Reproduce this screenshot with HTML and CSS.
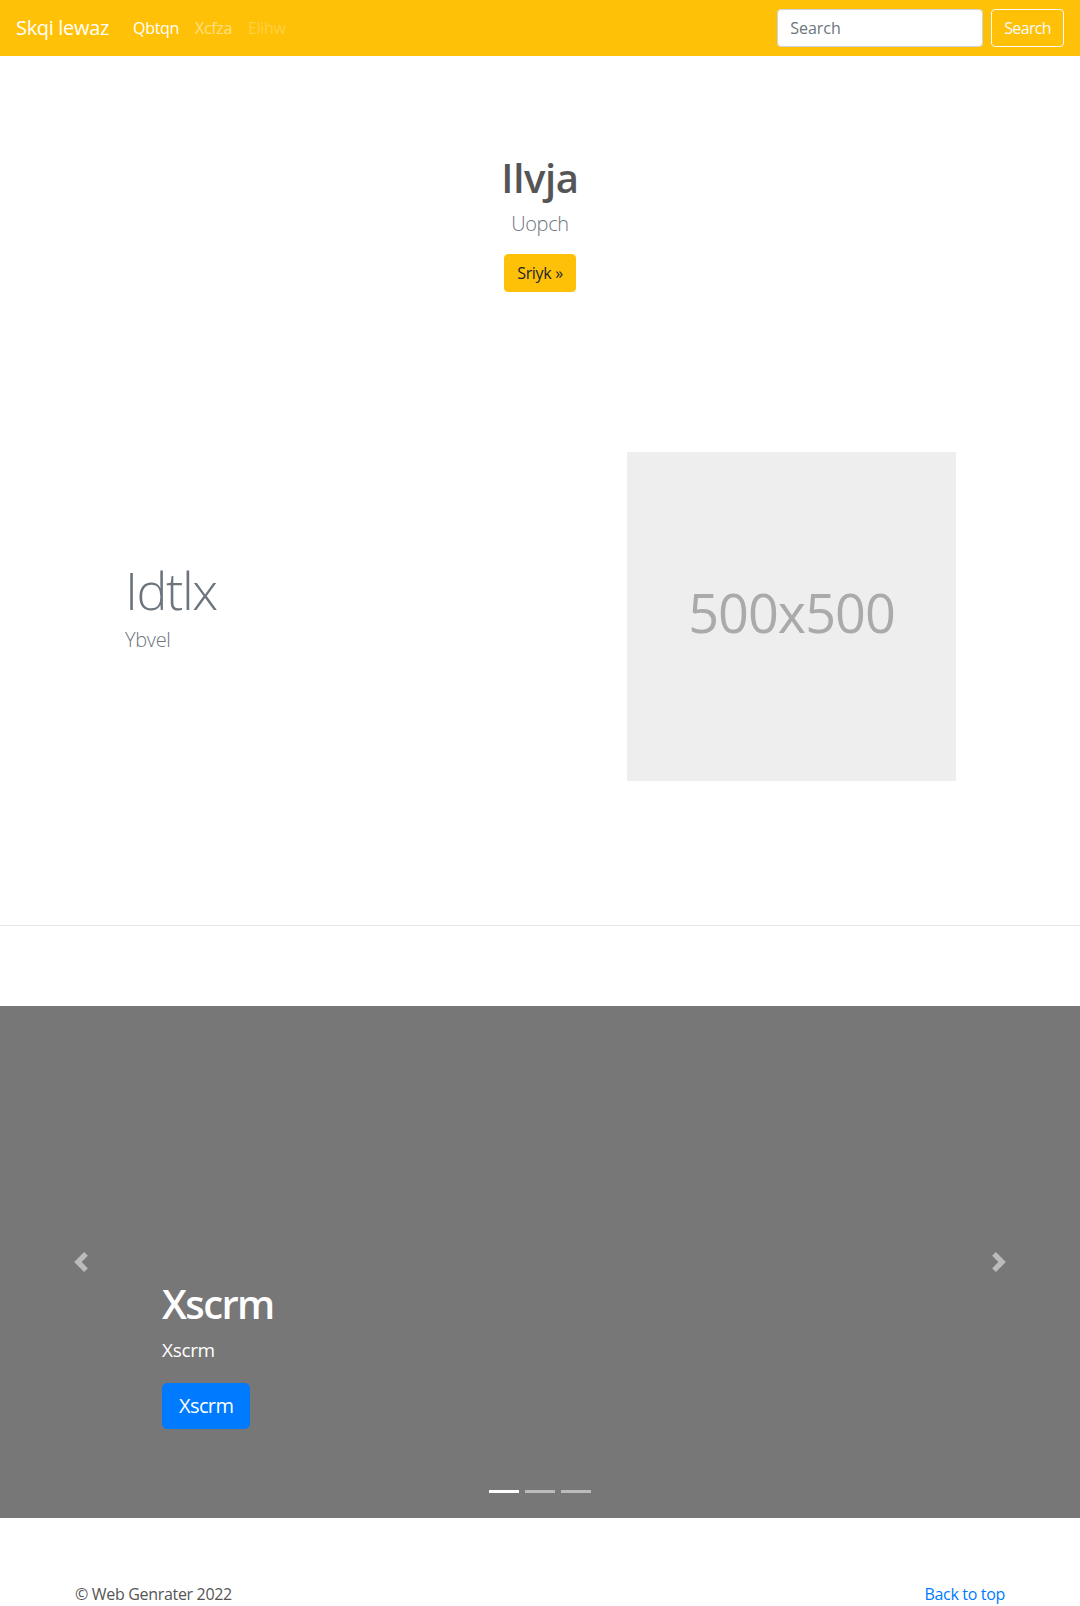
FILE: index.html
```html
<!DOCTYPE html>
<html lang="en">
<head>
<meta charset="utf-8">
<title>Skqi lewaz</title>
<link rel="stylesheet" href="styles.css">
</head>
<body>
<nav class="navbar">
  <a class="brand" href="#">Skqi lewaz</a>
  <ul class="nav">
    <li><a class="nav-link active" href="#">Qbtqn</a></li>
    <li><a class="nav-link" href="#">Xcfza</a></li>
    <li><a class="nav-link disabled" href="#">Elihw</a></li>
  </ul>
  <form class="search">
    <input class="search-input" type="text" placeholder="Search">
    <button class="search-btn" type="button">Search</button>
  </form>
</nav>

<section class="hero">
  <h1 class="hero-title">Ilvja</h1>
  <p class="hero-lead">Uopch</p>
  <a class="btn-warning" href="#">Sriyk &raquo;</a>
</section>

<section class="feature">
  <div class="feature-text">
    <h2 class="display">Idtlx</h2>
    <p class="feature-lead">Ybvel</p>
  </div>
  <div class="feature-media">
    <svg class="placeholder" width="329" height="329" viewBox="0 0 329 329">
      <rect width="329" height="329" fill="#eeeeee"/>
      <text x="164.5" y="181" text-anchor="middle" class="ph-text">500x500</text>
    </svg>
  </div>
</section>

<hr class="divider">

<div class="carousel">
  <ol class="indicators">
    <li class="active"></li>
    <li></li>
    <li></li>
  </ol>
  <div class="caption">
    <h1 class="caption-title">Xscrm</h1>
    <p class="caption-text">Xscrm</p>
    <p class="caption-action"><a class="btn-primary" href="#">Xscrm</a></p>
  </div>
  <a class="control control-prev" href="#">
    <svg width="20" height="20" viewBox="0 0 8 8"><path fill="#fff" d="M5.25 0l-4 4 4 4 1.5-1.5L4.25 4l2.5-2.5L5.25 0z"/></svg>
  </a>
  <a class="control control-next" href="#">
    <svg width="20" height="20" viewBox="0 0 8 8"><path fill="#fff" d="M2.75 0l-1.5 1.5L3.75 4l-2.5 2.5L2.75 8l4-4-4-4z"/></svg>
  </a>
</div>

<footer class="footer">
  <p class="copy">&copy; Web Genrater 2022</p>
  <p class="totop"><a href="#">Back to top</a></p>
</footer>
</body>
</html>
```

FILE: styles.css
```css
* { box-sizing: border-box; }

html, body {
  margin: 0;
  padding: 0;
}

body {
  font-family: "Open Sans", "Noto Sans", "Liberation Sans", sans-serif;
  font-size: 16px;
  line-height: 1.5;
  color: #555;
  background: #fff;
  letter-spacing: -0.02em;
}

a { text-decoration: none; }

/* Navbar */
.navbar {
  display: flex;
  align-items: center;
  height: 56px;
  padding: 0 16px;
  background: #ffc107;
}

.brand {
  font-size: 20px;
  line-height: 30px;
  color: #fff;
  margin-right: 16px;
}

.nav {
  display: flex;
  list-style: none;
  margin: 0;
  padding: 0;
}

.nav-link {
  display: block;
  padding: 8px;
  color: rgba(255, 255, 255, 0.5);
}

.nav-link.active { color: #fff; }
.nav-link.disabled { color: rgba(255, 255, 255, 0.25); }

.search {
  display: flex;
  align-items: center;
  margin-left: auto;
}

.search-input {
  width: 206px;
  height: 38px;
  padding: 6px 12px;
  font: inherit;
  font-size: 16px;
  color: #495057;
  background: #fff;
  border: 1px solid #ced4da;
  border-radius: 4px;
  margin-right: 8px;
}

.search-input::placeholder { color: #6c757d; }

.search-btn {
  height: 38px;
  padding: 6px 12px;
  font: inherit;
  font-size: 16px;
  letter-spacing: -0.04em;
  color: #f8f9fa;
  background: transparent;
  border: 1px solid #f8f9fa;
  border-radius: 4px;
}

/* Hero */
.hero {
  text-align: center;
  padding-top: 98px;
}

.hero-title {
  margin: 0 0 7px;
  font-size: 40px;
  font-weight: 600;
  line-height: 1.2;
  color: #555;
}

.hero-lead {
  margin: 0 0 15px;
  font-size: 20px;
  font-weight: 300;
  color: #6c757d;
}

.btn-warning {
  display: inline-block;
  padding: 6px 12px;
  line-height: 24px;
  color: #212529;
  background: #ffc107;
  border: 1px solid #ffc107;
  border-radius: 4px;
}

/* Feature */
.feature {
  display: grid;
  grid-template-columns: 540px 1fr;
  align-items: center;
  padding: 160px 0 144px;
}

.feature-text {
  padding-left: 125px;
  padding-bottom: 17px;
}

.display {
  margin: 0 0 7px;
  font-size: 52px;
  font-weight: 300;
  line-height: 1.1;
  letter-spacing: -1.5px;
  color: #6c757d;
}

.feature-lead {
  margin: 0;
  font-size: 20px;
  font-weight: 300;
  color: #6c757d;
}

.feature-media { padding-left: 87px; }

.placeholder { display: block; }

.ph-text {
  font-family: "Open Sans", sans-serif;
  font-size: 54px;
  fill: #aaaaaa;
  letter-spacing: -1px;
}

.divider {
  margin: 0 0 80px;
  border: 0;
  border-top: 1px solid #e5e5e5;
}

/* Carousel */
.carousel {
  position: relative;
  height: 512px;
  background: #777;
  margin-bottom: 64px;
}

.indicators {
  position: absolute;
  left: 0;
  right: 0;
  bottom: 15px;
  display: flex;
  justify-content: center;
  list-style: none;
  margin: 0;
  padding: 0;
}

.indicators li {
  width: 30px;
  height: 23px;
  margin: 0 3px;
  border-top: 10px solid transparent;
  border-bottom: 10px solid transparent;
  background: #fff;
  background-clip: padding-box;
  opacity: 0.5;
}

.indicators li.active { opacity: 1; }

.caption {
  position: absolute;
  left: 15%;
  right: 15%;
  bottom: 69px;
  padding: 20px 0;
  color: #fff;
}

.caption-title {
  margin: 0 0 8px;
  font-size: 40px;
  font-weight: 600;
  line-height: 1.2;
  letter-spacing: -0.04em;
}

.caption-text {
  margin: 0 0 19px;
  font-size: 19px;
}

.caption-action { margin: 0; }

.btn-primary {
  display: inline-block;
  padding: 8px 16px;
  font-size: 20px;
  line-height: 28px;
  letter-spacing: -0.03em;
  color: #fff;
  background: #007bff;
  border: 1px solid #007bff;
  border-radius: 5px;
}

.control {
  position: absolute;
  top: 0;
  bottom: 0;
  width: 15%;
  display: flex;
  align-items: center;
  justify-content: center;
  opacity: 0.5;
}

.control-prev { left: 0; }
.control-next { right: 0; }

/* Footer */
.footer {
  display: flex;
  justify-content: space-between;
  padding: 0 75px;
}

.footer p { margin: 0 0 16px; }

.totop a { color: #007bff; }
```
